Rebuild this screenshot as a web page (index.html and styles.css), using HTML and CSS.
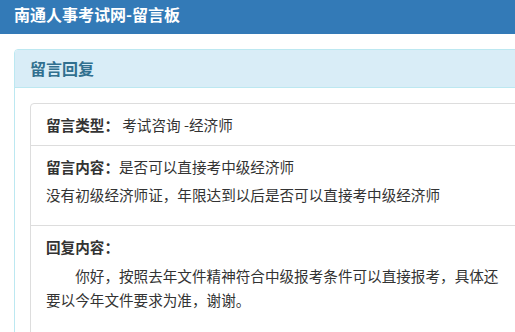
FILE: index.html
```html
<!DOCTYPE html>
<html lang="zh-CN">
<head>
<meta charset="utf-8">
<title>南通人事考试网-留言板</title>
<link rel="stylesheet" href="styles.css">
</head>
<body>
<header class="topbar">南通人事考试网-留言板</header>
<section class="panel">
  <div class="panel-heading">留言回复</div>
  <div class="panel-body">
    <ul class="list">
      <li class="item">
        <div class="line"><b>留言类型：</b> 考试咨询 -经济师</div>
      </li>
      <li class="item">
        <div class="line"><b>留言内容：</b>是否可以直接考中级经济师</div>
        <div class="line gap">没有初级经济师证，年限达到以后是否可以直接考中级经济师</div>
      </li>
      <li class="item">
        <div class="line"><b>回复内容：</b></div>
        <p class="reply">你好，按照去年文件精神符合中级报考条件可以直接报考，具体还要以今年文件要求为准，谢谢。</p>
      </li>
    </ul>
  </div>
</section>
</body>
</html>
```

FILE: styles.css
```css
html, body {
  margin: 0;
  padding: 0;
  overflow: hidden;
  background: #fff;
}
body {
  font-family: "Noto Sans CJK SC", "Noto Sans", "Liberation Sans", sans-serif;
  color: #333;
  width: 515px;
}
.topbar {
  background: #337ab7;
  color: #fff;
  font-weight: bold;
  font-size: 16px;
  line-height: 22px;
  height: 22px;
  padding: 3px 14px 9px;
}
.panel {
  margin: 15px 0 0 14px;
  width: 522px;
  border: 1px solid #bce8f1;
  border-radius: 4px 4px 0 0;
}
.panel-heading {
  background: #d9edf7;
  color: #31708f;
  font-size: 16px;
  font-weight: bold;
  line-height: 20px;
  padding: 8px 15px 9px;
  border-bottom: 1px solid #bce8f1;
  border-radius: 3px 3px 0 0;
}
.panel-body {
  padding: 15px;
}
.list {
  list-style: none;
  margin: 0;
  padding: 0;
  border: 1px solid #ddd;
  border-radius: 4px;
  width: 490px;
}
.item {
  padding: 10px 15px;
  font-size: 14.6px;
  line-height: 21px;
  border-top: 1px solid #ddd;
}
.item:first-child {
  border-top: 0;
}
.item b {
  font-weight: bold;
}
.gap {
  margin: 7px 0 10px;
}
.reply {
  margin: 7px 0 30px;
  text-indent: 2em;
  line-height: 24px;
}
```
